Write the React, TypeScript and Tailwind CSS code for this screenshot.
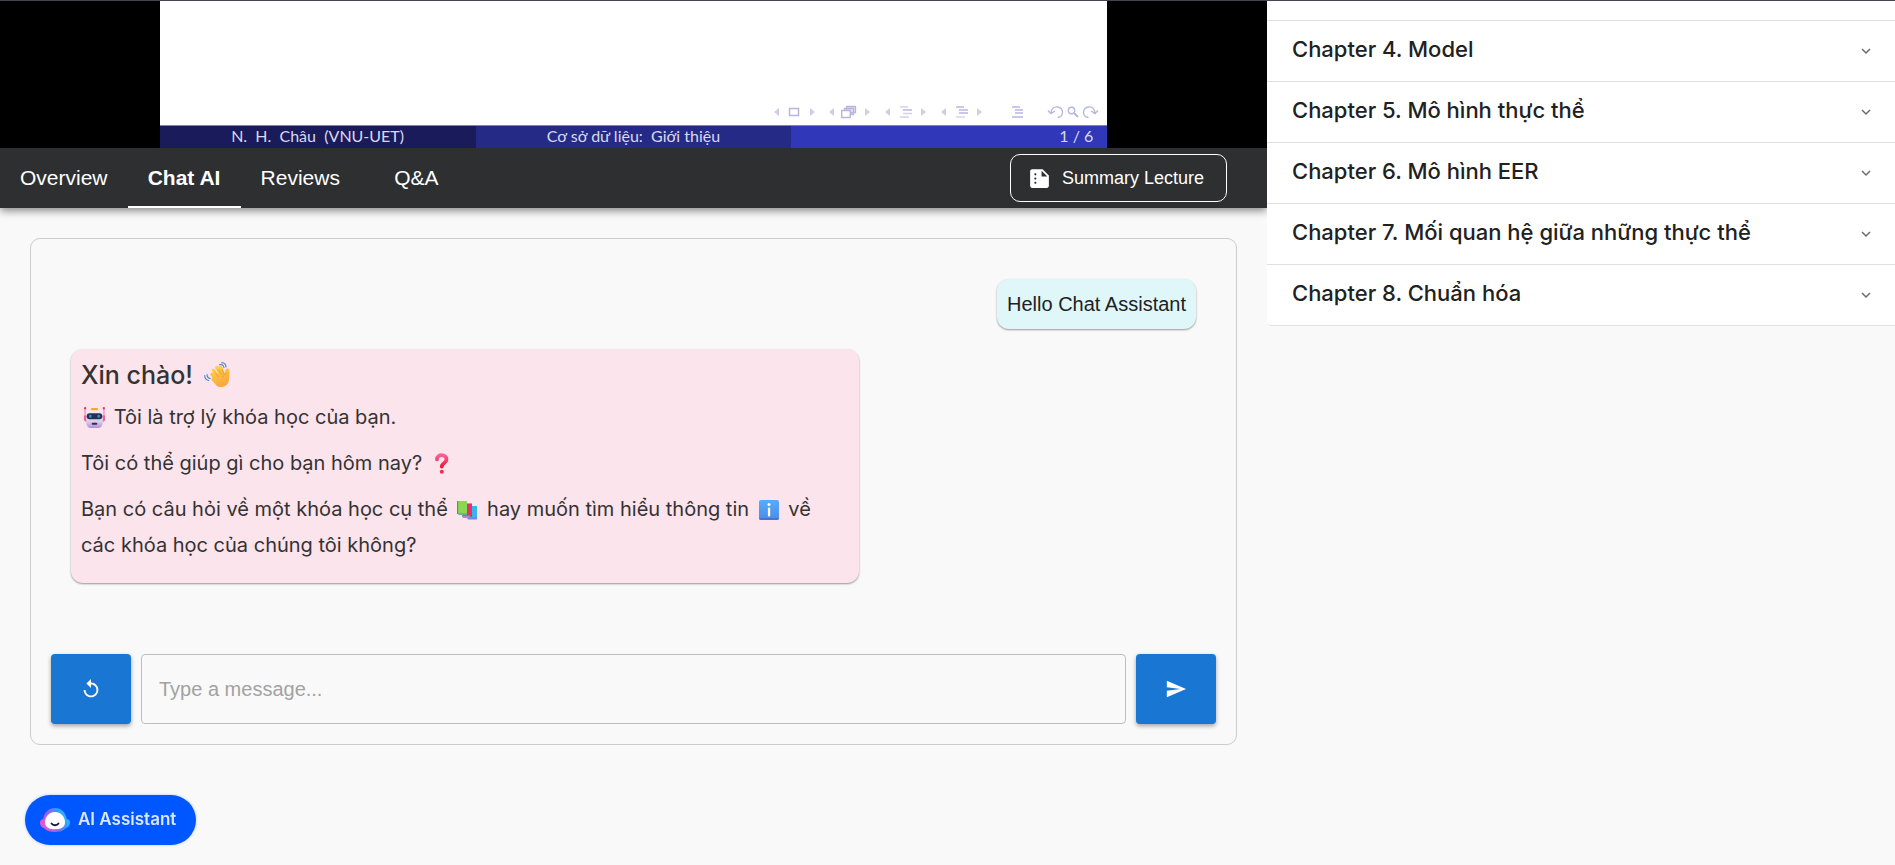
import { useState } from 'react';
import { MdReplay, MdSend, MdSummarize } from 'react-icons/md';

const tabs = ['Overview', 'Chat AI', 'Reviews', 'Q&A'];

const chapters = [
  'Chapter 4. Model',
  'Chapter 5. Mô hình thực thể',
  'Chapter 6. Mô hình EER',
  'Chapter 7. Mối quan hệ giữa những thực thể',
  'Chapter 8. Chuẩn hóa',
];

function SlideNav() {
  return (
    <svg width="326" height="18" viewBox="774 102 326 18" fill="none" stroke="#b9b6de" aria-hidden="true">
      <g fill="#cfcdea" stroke="none">
        <path d="M780 107v8l-5-4zM811 107v8l5-4zM835 107v8l-5-4zM866 107v8l5-4zM891 107v8l-5-4zM922 107v8l5-4zM947 107v8l-5-4zM978 107v8l5-4z" />
      </g>
      <path strokeWidth="1.5" d="M790.5 107.5h9v7h-9z" />
      <path strokeWidth="1.3" fill="#e4e2f3" d="M847.5 105.5h9v6h-9zM845.5 107.500h9v6h-9z" />
      <path strokeWidth="1.4" fill="#fff" d="M842.700 109.500h8.500v7h-8.500z" />
      <path strokeWidth="1.4" stroke="#d3d1ea" d="M901 106h8M904 112.500h9M901 116h9" />
      <path strokeWidth="1.5" d="M904 109h9" />
      <path strokeWidth="1.5" d="M957 106h8M960 109h9M960 112h9" />
      <path strokeWidth="1.4" stroke="#d3d1ea" d="M957 116h9" />
      <path strokeWidth="1.6" d="M1013 106h8M1016 109h8M1016 112h8M1013 116h11" />
      <path strokeWidth="1.4" d="M1052 112c1-9 12-7 11.500-.5-.3 3-2.500 5-5 5M1049 109.500l3 3 4-2.500" />
      <circle cx="1072.500" cy="109.500" r="3.200" strokeWidth="1.4" />
      <path strokeWidth="2" d="M1075 112l4 4" />
      <path strokeWidth="1.4" d="M1096 112c-1-9-12-7-11.500-.5.3 3 2.500 5 5 5M1099 109.500l-3 3-4-2.500" />
    </svg>
  );
}

function WaveEmoji() {
  return (
    <svg className="mx-1 inline-block align-[-4px]" width="26" height="26" viewBox="0 0 26 26" role="img" aria-label="👋">
      <defs>
        <linearGradient id="hand" gradientUnits="userSpaceOnUse" x1="8" y1="5" x2="20" y2="26">
          <stop offset="0" stopColor="#ffd24a" />
          <stop offset="1" stopColor="#f9a23a" />
        </linearGradient>
      </defs>
      <g stroke="url(#hand)" strokeWidth="3.400" strokeLinecap="round">
        <path d="M9.500 8.500l5 8M12.800 5.500l4.500 8M16.500 5.300l3 8M8 12.500l6 6" />
      </g>
      <path fill="url(#hand)" d="M9 14l9-6 3 3c0-3 1-5 3-4.500 1.800.5 1.600 3 1.500 5L25 18c-1 6.500-8 9-12.500 5.500L7 17.500z" />
      <path fill="none" stroke="#e88b28" strokeWidth=".7" strokeLinecap="round" d="M11.300 11l3 3.800M14.700 8l2.500 4.200M18.300 8l1.500 4M22 11.500c-1.500 1.500-2 2.500-3.500 3" />
      <path fill="none" stroke="#3b86d1" strokeWidth="1.100" strokeLinecap="round" d="M15.500 2.800c2.500-.8 4 .5 4.500 2.700M17.500.8c3-.3 4.500 1.700 4.500 4.200M.8 13.500c-.2 2.500 1.500 4.500 4 5M3 12.500c0 2 1.300 3.500 3.200 4" />
    </svg>
  );
}

function RobotEmoji() {
  return (
    <svg className="mx-[3px] inline-block align-[-4px]" width="21" height="21" viewBox="0 0 20 20" role="img" aria-label="🤖">
      <defs>
        <linearGradient id="robot" x1="0" y1="0" x2="0" y2="1">
          <stop offset="0" stopColor="#f3eef8" />
          <stop offset=".65" stopColor="#d9cdea" />
          <stop offset="1" stopColor="#b18fd8" />
        </linearGradient>
      </defs>
      <path stroke="#f58bb0" strokeWidth="1.200" d="M1 1v9M19 1v9" />
      <circle cx="1.100" cy="1.200" r="1.100" fill="#e8315f" />
      <circle cx="18.900" cy="1.200" r="1.100" fill="#e8315f" />
      <path fill="#f55f96" d="M0 8h3v6H1.500L0 12.500zM20 8h-3v6h1.500l1.500-1.500z" />
      <path fill="#f9a92a" d="M7 1h6l.8 3H6z" />
      <path fill="url(#robot)" d="M6 3h8c3 0 4 1.500 4 4v7c0 4-2 6-5 6H7c-3 0-5-2-5-6V7c0-2.500 1-4 4-4z" />
      <rect x="2.500" y="6" width="15" height="5.600" rx="2.800" fill="#29304f" />
      <rect x="4.800" y="7.300" width="2.400" height="3" rx="1" fill="#2d90d8" />
      <rect x="12.800" y="7.300" width="2.400" height="3" rx="1" fill="#2d90d8" />
      <rect x="7.300" y="15" width="5.400" height="2" rx="1" fill="#332b4d" />
    </svg>
  );
}

function QuestionEmoji() {
  return (
    <svg className="mx-[3px] inline-block align-[-4px]" width="21" height="21" viewBox="0 0 21 21" role="img" aria-label="❓">
      <defs>
        <linearGradient id="question" x1="0" y1="0" x2="0" y2="1">
          <stop offset="0" stopColor="#fb5f97" />
          <stop offset="1" stopColor="#ea1b39" />
        </linearGradient>
      </defs>
      <path fill="none" stroke="url(#question)" strokeWidth="3.800" strokeLinecap="round" strokeLinejoin="round" d="M6 6.300c0-5.700 9.500-5.500 9.500.2 0 3.700-4.700 3.200-4.700 7" />
      <circle cx="10.800" cy="18.800" r="2" fill="#f42c55" />
    </svg>
  );
}

function BooksEmoji() {
  return (
    <svg className="mx-1 inline-block align-[-4px]" width="20" height="20" viewBox="0 0 20 20" role="img" aria-label="📚">
      <path fill="#35b5f5" d="M13 6h7v12h-9z" />
      <path fill="#6a8fd8" d="M9.500 17H20v2.500H11z" />
      <path fill="#cc2a5d" d="M8 3.500h7v13H5z" />
      <path fill="#a98bc7" d="M4.500 15.500h9L12 18H6z" />
      <path fill="#e8306a" d="M10 4h5v11h-5z" />
      <path fill="#8cd653" d="M0 1h10v13H0z" />
      <path fill="#3fa64b" d="M0 1h1.200v13.500L0 13.500z" />
      <path fill="#6bb58d" d="M1 13h9v2H1.500z" />
    </svg>
  );
}

function InfoEmoji() {
  return (
    <svg className="mx-1 inline-block align-[-4px]" width="20" height="20" viewBox="0 0 20 20" role="img" aria-label="ℹ️">
      <defs>
        <linearGradient id="info" x1="0" y1="0" x2="0" y2="1">
          <stop offset="0" stopColor="#55adfb" />
          <stop offset="1" stopColor="#4d8ae8" />
        </linearGradient>
      </defs>
      <rect width="20" height="20" rx="2" fill="url(#info)" />
      <path d="M0 18h20a2 2 0 0 1-2 2H2a2 2 0 0 1-2-2z" fill="#3f77d2" />
      <circle cx="10" cy="4.600" r="1.500" fill="#fff" />
      <rect x="8.900" y="7.400" width="2.300" height="9" rx="1" fill="#fff" />
    </svg>
  );
}

function AssistantFace() {
  return (
    <svg width="30" height="26" viewBox="0 0 30 26" aria-hidden="true">
      <defs>
        <linearGradient id="face" x1="0" y1=".7" x2="1" y2=".3">
          <stop offset="0" stopColor="#f556c8" />
          <stop offset=".4" stopColor="#9a5cf5" />
          <stop offset=".7" stopColor="#2f9bff" />
          <stop offset="1" stopColor="#2fc3ff" />
        </linearGradient>
      </defs>
      <path fill="url(#face)" d="M15 1c6.500 0 10.500 4.500 11.800 11 2 .3 3.200 1.500 3.200 3.500 0 2.500-1.500 5-3.800 5.500C23 24 19.500 25 15 25s-8-1-11.200-4C1.500 20.500 0 18 0 15.500c0-2 1.200-3.200 3.200-3.500C4.500 5.500 8.500 1 15 1z" />
      <path fill="#fff" d="M15 5c6 0 10 5 10 10.500 0 5-4.500 6.800-10 6.800S5 20.500 5 15.500C5 10 9 5 15 5z" />
      <path fill="none" stroke="#151a2c" strokeWidth="1.800" strokeLinecap="round" d="M11.500 16.500c1.500 2.300 5.500 2.300 7 0" />
    </svg>
  );
}

function Chevron() {
  return (
    <svg width="10" height="7" viewBox="0 0 10 7" fill="none" stroke="#6b6b6b" strokeWidth="1.500" aria-hidden="true">
      <path d="M1 1l4 4 4-4" />
    </svg>
  );
}

export default function App() {
  const [active, setActive] = useState('Chat AI');
  const [message, setMessage] = useState('');

  return (
    <div className="flex min-h-screen flex-col border-t border-[#484350] bg-[#f9f9f9] font-['Liberation_Sans',Arial,sans-serif] text-[#212121]">
      <div className="flex flex-1 items-start">
        <main className="min-w-0 flex-1">
          <section className="flex h-[147px] justify-center bg-black" aria-label="Lecture video">
            <div className="flex w-[74.8%] flex-col bg-white">
              <div className="flex flex-1 items-end justify-end pr-2 pb-1">
                <SlideNav />
              </div>
              <div className="grid h-[23px] grid-cols-3 border-t border-[#8583a8] font-['Lato','Open_Sans',sans-serif] text-base leading-5 whitespace-pre text-[#d9daf0]">
                <span className="bg-[#191b5a] text-center">N.  H.  Châu  (VNU-UET)</span>
                <span className="bg-[#252a87] text-center">Cơ sở dữ liệu:  Giới thiệu</span>
                <span className="bg-[#3037b8] pr-[14px] text-right">1 / 6</span>
              </div>
            </div>
          </section>

          <nav className="flex h-[60px] items-center justify-between bg-[#2d2f31] pr-10 shadow-[0_3px_8px_rgba(0,0,0,0.45)]">
            <div className="flex h-full">
              {tabs.map((tab) => (
                <button
                  key={tab}
                  type="button"
                  onClick={() => setActive(tab)}
                  className={
                    tab === active
                      ? 'min-w-[113px] border-b-2 border-white px-5 pt-[2px] text-[21px] font-bold text-white'
                      : 'min-w-[113px] px-5 text-[21px] text-white'
                  }
                >
                  {tab}
                </button>
              ))}
            </div>
            <button type="button" className="flex h-12 items-center gap-[10px] rounded-[10px] border border-white pr-[22px] pl-4 text-lg text-white">
              <MdSummarize size={25} />
              Summary Lecture
            </button>
          </nav>

          <section className="mx-[30px] mt-[30px] flex flex-col rounded-[10px] border border-[#ccc] p-5">
            <div className="flex flex-col gap-5 px-5 pt-5 pb-[71px]">
              <p className="self-end rounded-xl bg-[#e0f7fa] p-[10px] text-xl leading-[30px] shadow-[0_1px_2px_rgba(0,0,0,0.4)]">
                Hello Chat Assistant
              </p>
              <div className="w-[70%] rounded-xl bg-[#fce4ec] px-[10px] pt-[10px] pb-5 font-['Inter',sans-serif] text-xl leading-9 text-[#333] shadow-[0_1px_2px_rgba(0,0,0,0.4)]">
                <h2 className="mb-2 text-[25px] leading-8 font-medium">
                  Xin chào! <WaveEmoji />
                </h2>
                <p className="mb-[10px]">
                  <RobotEmoji /> Tôi là trợ lý khóa học của bạn.
                </p>
                <p className="mb-[10px]">
                  Tôi có thể giúp gì cho bạn hôm nay? <QuestionEmoji />
                </p>
                <p>
                  Bạn có câu hỏi về một khóa học cụ thể <BooksEmoji /> hay muốn tìm hiểu thông tin <InfoEmoji /> về các khóa học của chúng tôi không?
                </p>
              </div>
            </div>
            <form className="flex h-[70px] gap-[10px]" onSubmit={(e) => e.preventDefault()}>
              <button type="button" aria-label="Reset chat" className="flex w-20 items-center justify-center rounded bg-[#1976d2] text-white shadow-[0_2px_4px_rgba(0,0,0,0.35)]">
                <MdReplay size={22} />
              </button>
              <input
                type="text"
                aria-label="Message"
                placeholder="Type a message..."
                value={message}
                onChange={(e) => setMessage(e.target.value)}
                className="min-w-0 flex-1 rounded border border-[#bdbdbd] px-[17px] text-xl placeholder:text-[#a2a2a2]"
              />
              <button type="submit" aria-label="Send" className="flex w-20 items-center justify-center rounded bg-[#1976d2] text-white shadow-[0_2px_4px_rgba(0,0,0,0.35)]">
                <MdSend size={22} />
              </button>
            </form>
          </section>
        </main>

        <aside className="relative w-[628px] shrink-0 overflow-hidden rounded-bl bg-white pt-[19px]">
          <ul className="rounded-bl border-b border-[#e0e0e0] font-['Inter',sans-serif] text-[22px] font-medium">
            {chapters.map((chapter) => (
              <li key={chapter} className="border-t border-[#e0e0e0]">
                <button type="button" className="flex h-[60px] w-full items-center justify-between pr-6 pb-1 pl-[25px] text-left">
                  {chapter}
                  <span className="pt-1"><Chevron /></span>
                </button>
              </li>
            ))}
          </ul>
        </aside>
      </div>

      <button type="button" className="fixed bottom-5 left-[25px] flex h-[50px] items-center gap-2 rounded-full bg-[#0057ff] pr-5 pl-[15px] font-['Inter',sans-serif] text-[17px] font-semibold text-[#dbe6ff] shadow-[0_0_3px_rgba(0,87,255,0.3)]">
        <AssistantFace />
        AI Assistant
      </button>
    </div>
  );
}
